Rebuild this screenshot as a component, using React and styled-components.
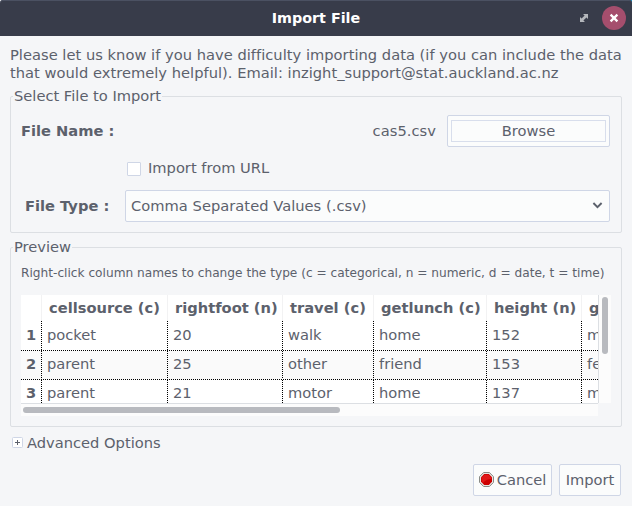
import React from "react";
import styled, { createGlobalStyle } from "styled-components";

const Global = createGlobalStyle`
  * { box-sizing: border-box; }
  html, body { margin: 0; padding: 0; background: #f5f6f8; overflow: hidden; }
  body { font-family: "DejaVu Sans", sans-serif; font-size: 14.667px; line-height: 18px; color: #5c616c; }
`;

const Window = styled.div`
  width: 632px;
  height: 506px;
  background:
    linear-gradient(90deg, #fff 50%, #1a9fd0 50%) 0 0 / 100% 4px no-repeat,
    #f5f6f8;
  display: flex;
  flex-direction: column;
  white-space: nowrap;
`;

const TitleBar = styled.header`
  flex: none;
  display: grid;
  grid-template-columns: 1fr auto 1fr;
  align-items: center;
  height: 36px;
  padding-right: 6px;
  padding-left: 6px;
  background: #383c4a;
  box-shadow: inset 0 1px 0 #4b5162;
  border-radius: 3px 3px 0 0;
`;

const Title = styled.h1`
  grid-column: 2;
  margin: 0;
  font-size: 14.3px;
  line-height: 18px;
  font-weight: bold;
  color: #fff;
`;

const WindowControls = styled.div`
  display: flex;
  justify-content: flex-end;
  align-items: center;
  gap: 14px;
  svg { display: block; }
`;

const Content = styled.main`
  flex: 1;
  display: flex;
  flex-direction: column;
  padding: 10px 10px 0;
`;

const Notice = styled.p`
  margin: 0;
  height: 36px;
`;

const Line = styled.span`
  display: block;
  letter-spacing: 0.02px;
`;

const Group = styled.section`
  flex: none;
  height: ${(p) => p.$height}px;
  margin-top: 14px;
  padding: 0 11px 0 10px;
  border: 1px solid #dcdfe3;
  border-radius: 2px;
`;

const GroupTitle = styled.h2`
  width: max-content;
  height: 18px;
  margin: -10px 0 0 -8px;
  padding: 0 1px;
  font-size: inherit;
  font-weight: normal;
  background: #f5f6f8;
`;

const FormRow = styled.div`
  display: flex;
  align-items: center;
  height: 32px;
  margin-top: ${(p) => p.$top || 0}px;
  padding-left: ${(p) => p.$left || 0}px;
`;

const Label = styled.label`
  font-weight: bold;
  width: ${(p) => p.$width || "auto"};
`;

const FileName = styled.span`
  margin-left: auto;
  margin-right: 11px;
  letter-spacing: 0.05px;
`;

const Button = styled.button`
  display: flex;
  align-items: center;
  justify-content: center;
  height: 32px;
  width: ${(p) => p.$width}px;
  padding: ${(p) => p.$padding || "0"};
  font: inherit;
  color: inherit;
  background: #fbfcfc;
  border: 1px solid #cfd6e6;
  border-radius: 2px;
`;

const FocusFrame = styled.span`
  flex: 1;
  height: 22px;
  line-height: 19px;
  border: 1px solid #d8deec;
`;

const Checkbox = styled.span`
  width: 14px;
  height: 14px;
  margin: 2px 7px 0 0;
  background: #fff;
  border: 1px solid #cfd6e6;
  border-radius: 1px;
`;

const Select = styled.div`
  display: flex;
  align-items: center;
  justify-content: space-between;
  width: 485px;
  height: 32px;
  padding: 0 6px 0 5px;
  letter-spacing: 0.03px;
  background: #fbfcfc;
  border: 1px solid #cfd6e6;
  border-radius: 2px;
  svg { margin-bottom: 1px; }
`;

const Hint = styled.p`
  margin: 9px 0 0;
  height: 30px;
  font-size: 12.175px;
  line-height: 16px;
`;

const TableArea = styled.div`
  display: grid;
  grid-template-columns: 577px 13px;
  grid-template-rows: 108px 13px;
`;

const Viewport = styled.div`
  overflow: hidden;
  background: #fff;
`;

const GridRow = styled.div`
  display: grid;
  grid-template-columns: 21px 126px 115px 91px 113px 95px 100px;
  width: 661px;
`;

const HeadRow = styled(GridRow)`
  height: 26px;
  font-weight: bold;
  line-height: 26px;
`;

const HeadCell = styled.span`
  padding-left: 7px;
  border-right: 1px solid #f2f2f3;
`;

const DataRow = styled(GridRow)`
  height: ${(p) => p.$height}px;
  padding-bottom: 1px;
  line-height: ${(p) => p.$height - 3}px;
  background:
    repeating-linear-gradient(90deg, #000 0 1px, transparent 1px 2px) 0 100% / 100% 1px no-repeat,
    ${(p) => (p.$shaded ? "#fafafa" : "#fff")};
`;

const DataCell = styled.span`
  padding-left: 5px;
  font-weight: ${(p) => (p.$bold ? "bold" : "normal")};
  background: repeating-linear-gradient(180deg, #000 0 1px, transparent 1px 2px) 100% 0 / 1px 100% no-repeat;
`;

const VerticalTrack = styled.div`
  padding: 2px 0 0 3px;
  background: #fcfcfc;
  border-left: 1px solid #dcdfe3;
`;

const HorizontalTrack = styled.div`
  padding: 3px 0 0 2px;
  background: #fcfcfc;
  border-top: 1px solid #dcdfe3;
`;

const Thumb = styled.div`
  width: ${(p) => p.$width}px;
  height: ${(p) => p.$height}px;
  border-radius: 3px;
  background: #b8babf;
`;

const Expander = styled.div`
  display: flex;
  align-items: center;
  gap: 4px;
  height: 18px;
  margin-top: 7px;
  padding-left: 2px;
  svg { margin-bottom: 1px; }
`;

const Actions = styled.footer`
  display: flex;
  justify-content: flex-end;
  gap: 7px;
  margin-top: 12px;
  padding-right: 1px;
`;

const StopIcon = styled.svg`
  flex: none;
  margin: 0 3px 1px 0;
`;

const columns = ["cellsource (c)", "rightfoot (n)", "travel (c)", "getlunch (c)", "height (n)", "gender (c)"];
const rows = [
  ["pocket", "20", "walk", "home", "152", "male"],
  ["parent", "25", "other", "friend", "153", "female"],
  ["parent", "21", "motor", "home", "137", "male"],
];

export default function App() {
  return (
    <Window>
      <Global />
      <TitleBar>
        <Title>Import File</Title>
        <WindowControls>
          <svg width="8" height="8" viewBox="0 0 8 8">
            <path d="M3 0H8V5L6.4 3.4L3.4 6.4L5 8H0V3L1.6 4.6L4.6 1.6Z" fill="#b4b7bc" />
          </svg>
          <svg width="24" height="24" viewBox="0 0 24 24">
            <circle cx="12" cy="12" r="12" fill="#a54e6d" />
            <path d="M8.6 8.6L15.4 15.4M15.4 8.6L8.6 15.4" stroke="#fff" strokeWidth="2.3" />
          </svg>
        </WindowControls>
      </TitleBar>
      <Content>
        <Notice>
          <Line>Please let us know if you have difficulty importing data (if you can include the data</Line>
          <Line>that would extremely helpful). Email: inzight_support@stat.auckland.ac.nz</Line>
        </Notice>
        <Group $height={137}>
          <GroupTitle>Select File to Import</GroupTitle>
          <FormRow $top={10}>
            <Label>File Name :</Label>
            <FileName>cas5.csv</FileName>
            <Button $width={163} $padding="0 3px">
              <FocusFrame>Browse</FocusFrame>
            </Button>
          </FormRow>
          <FormRow $top={5} $left={106}>
            <Checkbox />
            <span>Import from URL</span>
          </FormRow>
          <FormRow $top={6} $left={4}>
            <Label $width="100px">File Type :</Label>
            <Select>
              <span>Comma Separated Values (.csv)</span>
              <svg width="11" height="8" viewBox="0 0 11 8">
                <path d="M1.4 1L5.5 5.1L9.6 1" fill="none" stroke="#5c616c" strokeWidth="1.9" />
              </svg>
            </Select>
          </FormRow>
        </Group>
        <Group $height={180}>
          <GroupTitle>Preview</GroupTitle>
          <Hint>Right-click column names to change the type (c = categorical, n = numeric, d = date, t = time)</Hint>
          <TableArea>
            <Viewport>
              <HeadRow>
                <HeadCell />
                {columns.map((name) => (
                  <HeadCell key={name}>{name}</HeadCell>
                ))}
              </HeadRow>
              {rows.map((row, i) => (
                <DataRow key={i} $height={i === 0 ? 30 : 29} $shaded={i === 1}>
                  <DataCell $bold>{i + 1}</DataCell>
                  {row.map((value, j) => (
                    <DataCell key={j}>{value}</DataCell>
                  ))}
                </DataRow>
              ))}
            </Viewport>
            <VerticalTrack>
              <Thumb $width={6} $height={57} />
            </VerticalTrack>
            <HorizontalTrack>
              <Thumb $width={317} $height={6} />
            </HorizontalTrack>
          </TableArea>
        </Group>
        <Expander>
          <svg width="11" height="11" viewBox="0 0 11 11">
            <rect x="0.5" y="0.5" width="10" height="10" rx="1" fill="#fff" stroke="#cfd6e6" />
            <path d="M3 5.5H8M5.5 3V8" stroke="#5c616c" />
          </svg>
          <span>Advanced Options</span>
        </Expander>
        <Actions>
          <Button $width={79}>
            <StopIcon width="15" height="15" viewBox="0 0 15 15">
              <path d="M4.6 0.5H10.4L14.5 4.6V10.4L10.4 14.5H4.6L0.5 10.4V4.6Z" fill="#e6e6e2" stroke="#888a85" />
              <path d="M5.2 2H9.8L13 5.2V9.8L9.8 13H5.2L2 9.8V5.2Z" fill="#cc0000" />
              <path d="M5.4 2.7H9.6L12.3 5.4V7Q7 7 4 11L2.7 9.6V5.4Z" fill="#e01818" />
            </StopIcon>
            Cancel
          </Button>
          <Button $width={62}>Import</Button>
        </Actions>
      </Content>
    </Window>
  );
}
